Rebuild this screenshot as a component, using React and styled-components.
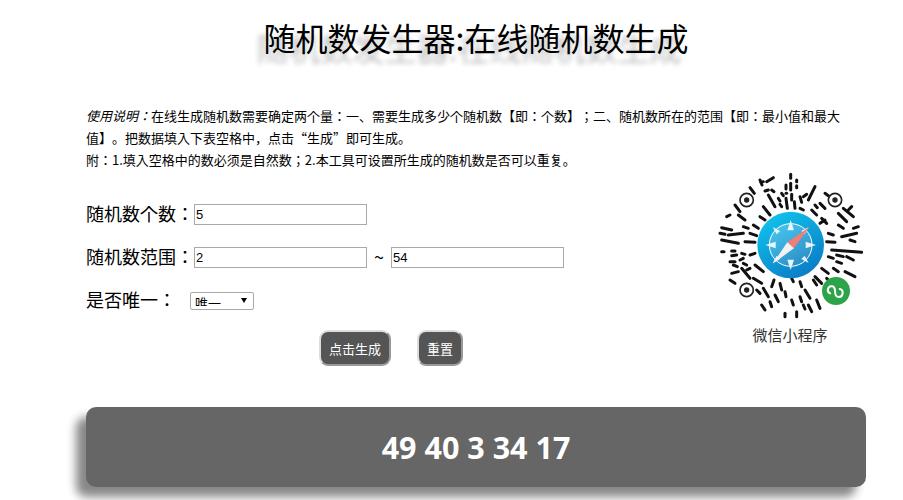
import styled, { createGlobalStyle } from "styled-components"

const Global = createGlobalStyle`
  html, body { margin: 0; padding: 0; background: #fff; }
  body {
    font-family: "Noto Sans CJK JP", "Noto Sans CJK SC", "Liberation Sans", sans-serif;
    color: #000;
    overflow: hidden;
    text-spacing-trim: space-all;
    font-kerning: none;
  }
`
const Page = styled.div`
  width: 780px;
  height: 500px;
  margin-left: 86px;
`
const Title = styled.h1`
  margin: 0;
  padding-top: 13px;
  height: 57px;
  line-height: 48px;
  font-size: 32px;
  font-weight: 400;
  font-family: "Noto Sans CJK SC", sans-serif;
  text-align: center;
  text-shadow: -7px 10px 5px #c0c0c0;
`
const Intro = styled.p`
  margin: 35px 0 0;
  font-size: 13px;
  line-height: 22px;
  width: 760px;
`
const Em = styled.em`
  font-style: italic;
`
const Quoted = styled.span`
  font-feature-settings: "fwid";
`
const Main = styled.div`
  display: flex;
  justify-content: space-between;
`
const Form = styled.form`
  display: flex;
  flex-direction: column;
  padding-top: 22px;
`
const Row = styled.div`
  display: flex;
  align-items: center;
  height: 43px;
`
const Label = styled.label`
  font-size: 18px;
  line-height: 24px;
  padding-bottom: 3px;
  width: ${p => p.$width || 108}px;
  flex: none;
`
const Field = styled.input`
  box-sizing: border-box;
  width: 173px;
  height: 21px;
  padding: 1px 1px;
  border: 1px solid #a9a9a9;
  border-radius: 0;
  font: 13px "Liberation Sans", sans-serif;
  color: #000;
  outline: none;
`
const Tilde = styled.span`
  width: 24px;
  text-align: center;
  font-size: 18px;
  line-height: 24px;
  padding-bottom: 3px;
`
const SelectWrap = styled.div`
  position: relative;
  width: 64px;
  height: 18px;
  &::after {
    content: "";
    position: absolute;
    right: 7px;
    top: 6px;
    border-left: 3px solid transparent;
    border-right: 3px solid transparent;
    border-top: 5px solid #000;
  }
`
const Select = styled.select`
  appearance: none;
  box-sizing: border-box;
  display: block;
  width: 64px;
  height: 18px;
  padding: 0 0 3px 4px;
  border: 1px solid #a9a9a9;
  border-radius: 2px;
  background: #fff;
  font: 13px "Noto Sans CJK SC", sans-serif;
  color: #000;
`
const Actions = styled.div`
  display: flex;
  gap: 26px;
  padding: 8px 0 0 233px;
`
const Button = styled.button`
  box-sizing: border-box;
  height: 36px;
  padding: 0 8px;
  background: #555;
  border: 2px solid #aaa;
  border-top-color: #ddd;
  border-left-color: #ddd;
  border-right-color: #999;
  border-bottom-color: #999;
  border-radius: 9px;
  color: #fff;
  font: 13px "Noto Sans CJK SC", sans-serif;
`
const Mini = styled.figure`
  margin: -6px -14px 0 0;
  width: 180px;
  display: flex;
  flex-direction: column;
  align-items: center;
`
const Code = styled.svg`
  display: block;
  filter: blur(0.35px);
`
const Caption = styled.figcaption`
  font-size: 15px;
  line-height: 20px;
  color: #333;
  font-family: "Noto Sans CJK SC", sans-serif;
`
const Result = styled.div`
  margin-top: 41px;
  height: 80px;
  border-radius: 10px;
  background: #666;
  box-shadow: -10px 10px 10px #888;
  color: #fff;
  font: 700 30.5px/80px "Open Sans", sans-serif;
  text-align: center;
`

const strokes = [
  [183,52,190,50],[200,50,220,38],[272,28,272,40],[258,60,258,72],[272,55,272,75],[290,45,290,50],[290,62,290,68],
  [258,85,260,85],[275,88,275,105],[258,100,262,130],[283,110,285,130],[150,68,163,85],[195,78,205,75],[205,90,225,125],
  [235,100,240,108],[190,125,210,150],[240,118,245,125],[345,65,325,105],[310,95,320,88],[375,85,385,92],[360,115,375,130],
  [335,135,350,150],[365,160,380,175],[300,130,310,135],[105,120,120,140],[80,155,90,150],[115,150,135,165],[180,155,195,165],
  [65,188,95,195],[60,205,75,208],[85,210,130,205],[65,225,115,235],[135,230,165,232],[150,205,170,212],[160,180,175,190],
  [65,260,72,260],[95,258,105,258],[95,272,110,270],[125,265,135,268],[90,290,105,290],[120,285,130,280],[150,270,165,265],
  [95,325,115,320],[90,345,105,355],[125,310,150,340],[165,300,190,320],[160,340,185,355],[140,315,150,310],
  [222,345,215,365],[240,355,245,375],[275,340,280,350],[300,350,305,365],[190,370,205,395],[185,420,195,435],[210,410,215,425],
  [255,380,258,395],[275,405,280,420],[255,445,255,455],[290,440,290,455],[315,375,330,400],[325,420,335,440],[350,405,360,430],
  [345,335,365,355],[365,310,385,325],[400,310,415,320],[435,320,465,335],[410,270,430,275],[395,255,485,262],[385,275,400,280],
  [440,275,460,285],[380,230,405,232],[425,215,470,205],[450,225,465,230],[460,190,475,185],[415,180,430,190],[430,130,460,155],
  [415,145,440,170],[445,135,455,125],[360,175,375,165],[385,205,400,210],[340,345,350,360],[300,395,305,410],
  [100,300,112,305],[130,295,140,300],[215,75,222,80],[180,45,186,60],[300,95,305,112],[245,85,250,92],
  [170,375,180,385],[225,390,235,410],[310,420,315,432],[380,340,390,350],[410,290,425,295],[130,185,145,190],[345,120,352,128]
]
const finders = [[140,105],[405,105],[140,375]]

const MiniCode = () => (
  <Code width="180" height="160" viewBox="0 0 540 480">
    <g stroke="#111" strokeWidth="9" strokeLinecap="round">
      {strokes.map(([a, b, c, d], i) => <line key={i} x1={a} y1={b} x2={c} y2={d} />)}
    </g>
    {finders.map(([x, y]) => (
      <g key={x + "-" + y}>
        <circle cx={x} cy={y} r="20" fill="none" stroke="#222" strokeWidth="5" />
        <circle cx={x} cy={y} r="8" fill="#222" />
      </g>
    ))}
    <defs>
      <linearGradient id="dial" x1="0.2" y1="0" x2="0.8" y2="1">
        <stop offset="0" stopColor="#10c4ec" />
        <stop offset="1" stopColor="#0b78c4" />
      </linearGradient>
      <linearGradient id="face" x1="0.2" y1="0" x2="0.8" y2="1">
        <stop offset="0" stopColor="#47c6ec" />
        <stop offset="1" stopColor="#2a8cc6" />
      </linearGradient>
    </defs>
    <circle cx="272" cy="240" r="100" fill="url(#dial)" />
    <circle cx="272" cy="240" r="64" fill="url(#face)" stroke="#fff" strokeWidth="3" />
    <g fill="#e8f4fa">
      <polygon points="272,165 262,196 282,196" />
      <polygon points="272,315 262,284 282,284" />
      <polygon points="196,240 227,230 227,250" />
      <polygon points="348,240 317,230 317,250" />
      <polygon points="218,186 240,198 230,208" />
      <polygon points="326,294 304,282 314,272" />
      <polygon points="218,294 230,272 240,282" />
      <polygon points="326,186 314,208 304,198" />
    </g>
    <polygon points="328,186 262,232 282,250" fill="#ef7d78" />
    <polygon points="218,296 262,232 282,250" fill="#f2f2f2" />
    <circle cx="408" cy="378" r="42" fill="#2ea44a" />
    <path d="M392 392c-12 -2 -12 -22 2 -22c10 0 10 8 12 16c2 8 4 14 14 12c12 -2 12 -24 -2 -24" fill="none" stroke="#fff" strokeWidth="6" strokeLinecap="round" transform="rotate(10 408 378) translate(0 -4)" />
  </Code>
)

const App = () => {
  return (
    <Page>
      <Global />
      <Title>随机数发生器:在线随机数生成</Title>
      <Intro>
        <Em>使用说明：</Em>在线生成随机数需要确定两个量：一、需要生成多少个随机数【即：个数】；二、随机数所在的范围【即：最小值和最大值】。把数据填入下表空格中，点击<Quoted>“生成”</Quoted>即可生成。
        <br />
        附：1.填入空格中的数必须是自然数；2.本工具可设置所生成的随机数是否可以重复。
      </Intro>
      <Main>
        <Form>
          <Row>
            <Label>随机数个数：</Label>
            <Field defaultValue="5" />
          </Row>
          <Row>
            <Label>随机数范围：</Label>
            <Field defaultValue="2" />
            <Tilde>~</Tilde>
            <Field defaultValue="54" />
          </Row>
          <Row>
            <Label $width={104}>是否唯一：</Label>
            <SelectWrap>
              <Select defaultValue="1">
                <option value="1">唯一</option>
                <option value="0">可重复</option>
              </Select>
            </SelectWrap>
          </Row>
          <Actions>
            <Button type="button">点击生成</Button>
            <Button type="button">重置</Button>
          </Actions>
        </Form>
        <Mini>
          <MiniCode />
          <Caption>微信小程序</Caption>
        </Mini>
      </Main>
      <Result>49 40 3 34 17</Result>
    </Page>
  )
}

export default App
